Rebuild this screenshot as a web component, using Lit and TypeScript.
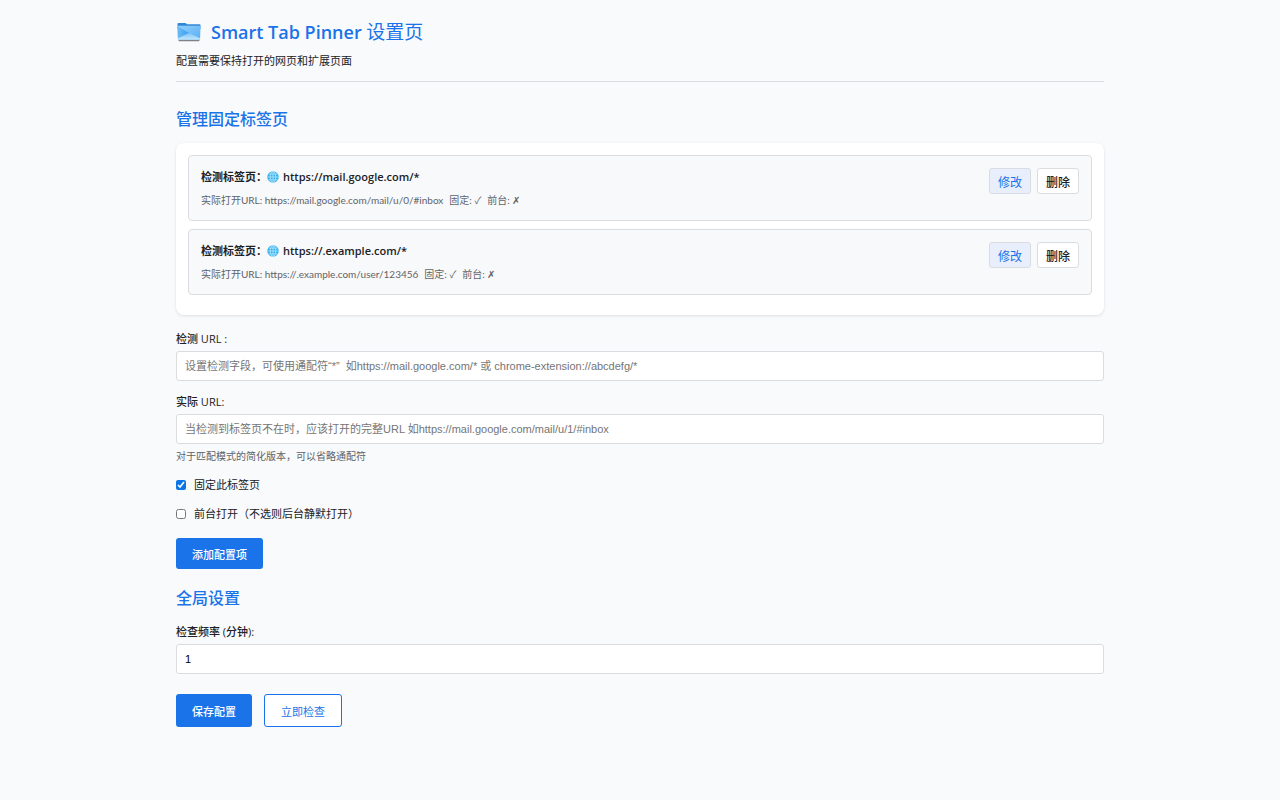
import { LitElement, html, css } from "lit";
import { customElement, property, state } from "lit/decorators.js";

interface PinRule {
  match: string;
  open: string;
  pinned: boolean;
  foreground: boolean;
}

const globe = html`<svg class="globe" viewBox="0 0 24 24" aria-hidden="true">
  <circle cx="12" cy="12" r="11.5" fill="#2fb0f0"></circle>
  <g fill="none" stroke="#b5e6fb" stroke-width="1.7">
    <ellipse cx="12" cy="12" rx="5.5" ry="11"></ellipse>
    <path d="M12 1v22M1 12h22M3 6.3h18M3 17.7h18"></path>
  </g>
</svg>`;

const folder = html`<svg class="folder" viewBox="0 0 26 22" aria-hidden="true">
  <defs>
    <linearGradient id="body" x1="0" y1="0" x2="1" y2="1">
      <stop offset="0" stop-color="#8fd0fb"></stop>
      <stop offset="1" stop-color="#5aaef5"></stop>
    </linearGradient>
    <linearGradient id="left" x1="0" y1="0" x2="1" y2="0">
      <stop offset="0" stop-color="#6cbcf6"></stop>
      <stop offset="1" stop-color="#3c9df0"></stop>
    </linearGradient>
    <linearGradient id="bottom" x1="0" y1="0" x2="0" y2="1">
      <stop offset="0" stop-color="#7cc4f8"></stop>
      <stop offset="1" stop-color="#c4e6fb"></stop>
    </linearGradient>
  </defs>
  <path d="M2.500 18h21v1.400a.8.8 0 0 1-.8.8H3.300a.8.8 0 0 1-.8-.8z" fill="#7d8188"></path>
  <path d="M1.500 3a1 1 0 0 1 1-1h7l1.600 1.200H23.500a1 1 0 0 1 1 1V8h-23z" fill="#3387d2"></path>
  <path d="M1.500 4.800h23l-.4 13a1 1 0 0 1-1 1H2.900a1 1 0 0 1-1-1z" fill="url(#body)"></path>
  <path d="M1.500 5.200L13 12 1.900 17.300z" fill="url(#left)"></path>
  <path d="M1.900 17.300L13 12l11.100 5.300a1 1 0 0 1-1 1.500H2.900a1 1 0 0 1-1-1.500z" fill="url(#bottom)"></path>
</svg>`;

@customElement("pin-item")
class PinItem extends LitElement {
  @property({ attribute: false }) rule!: PinRule;

  static styles = css`
    :host {
      display: flex;
      justify-content: space-between;
      align-items: flex-start;
      gap: 12px;
      padding: 12px;
      background: #f8f9fb;
      border: 1px solid #dadce0;
      border-radius: 4px;
    }
    .info {
      min-width: 0;
    }
    .match {
      display: flex;
      align-items: center;
      font-size: 11px;
      line-height: 18px;
      font-weight: 600;
      color: #202124;
    }
    .globe {
      width: 12px;
      height: 12px;
      margin-right: 4px;
    }
    .detail {
      display: flex;
      gap: 6px;
      margin-top: 6px;
      font-family: Lato, "Noto Sans CJK SC", sans-serif;
      font-size: 10px;
      line-height: 16px;
      color: #5f6368;
    }
    .actions {
      display: flex;
      gap: 6px;
      flex: none;
    }
    button {
      box-sizing: border-box;
      height: 26px;
      padding: 0 8px;
      border: 1px solid #dadce0;
      border-radius: 3px;
      background: #fff;
      color: #202124;
      font-family: "Liberation Sans", "Noto Sans CJK SC", sans-serif;
      font-size: 12px;
      font-weight: 500;
      cursor: pointer;
    }
    .edit {
      background: #e8eefc;
      color: #1a73e8;
      font-weight: 400;
    }
  `;

  render() {
    const mark = (on: boolean) => (on ? "✓" : "✗");
    return html`
      <div class="info">
        <div class="match">检测标签页：${globe}${this.rule.match}</div>
        <div class="detail">
          <span>实际打开URL: ${this.rule.open}</span>
          <span>固定: ${mark(this.rule.pinned)}</span>
          <span>前台: ${mark(this.rule.foreground)}</span>
        </div>
      </div>
      <div class="actions">
        <button class="edit" type="button">修改</button>
        <button type="button">删除</button>
      </div>
    `;
  }
}

@customElement("app-root")
class AppRoot extends LitElement {
  @state() private rules: PinRule[] = [
    { match: "https://mail.google.com/*", open: "https://mail.google.com/mail/u/0/#inbox", pinned: true, foreground: false },
    { match: "https://.example.com/*", open: "https://.example.com/user/123456", pinned: true, foreground: false },
  ];

  static styles = css`
    :host {
      display: block;
      box-sizing: border-box;
      min-height: 100vh;
      background: #f8fafc;
      color: #202124;
      font-family: "Open Sans", "Noto Sans CJK SC", sans-serif;
      font-size: 11px;
      line-height: 16px;
    }
    main {
      box-sizing: border-box;
      max-width: 960px;
      margin: 0 auto;
      padding: 20px 16px;
    }
    header {
      padding-bottom: 11px;
      border-bottom: 1px solid #dadce0;
    }
    h1 {
      display: flex;
      align-items: center;
      gap: 9px;
      margin: 0;
      font-size: 18px;
      line-height: 24px;
      font-weight: 600;
      color: #1a73e8;
    }
    .zh {
      font-size: 19px;
      font-weight: 400;
    }
    .folder {
      width: 26px;
      height: 22px;
    }
    .subtitle {
      margin: 8px 0 0;
      line-height: 18px;
    }
    h2 {
      margin: 25px 0 12px;
      font-size: 16px;
      line-height: 24px;
      font-weight: 500;
      color: #1a73e8;
    }
    .panel {
      display: flex;
      flex-direction: column;
      gap: 8px;
      margin-bottom: 16px;
      padding: 12px 12px 20px;
      background: #fff;
      border-radius: 8px;
      box-shadow: 0 1px 3px rgba(60, 64, 67, 0.14);
    }
    .field {
      display: flex;
      flex-direction: column;
      gap: 4px;
      margin-bottom: 13px;
    }
    .field label {
      font-weight: 500;
    }
    .text {
      box-sizing: border-box;
      width: 100%;
      height: 30px;
      padding: 0 8px;
      border: 1px solid #dadce0;
      border-radius: 3px;
      background: #fff;
      color: #000;
      font-family: "Liberation Sans", "Noto Sans CJK SC", sans-serif;
      font-size: 11px;
    }
    .text::placeholder {
      color: #757575;
    }
    .hint {
      font-size: 10px;
      color: #5f6368;
    }
    .check {
      display: flex;
      align-items: center;
      gap: 8px;
      margin-bottom: 13px;
    }
    .check input {
      width: 10px;
      height: 10px;
      margin: 0;
      accent-color: #0b75e8;
    }
    .primary,
    .outline {
      box-sizing: border-box;
      min-height: 31px;
      padding: 0 16px;
      border: 0;
      border-radius: 3px;
      background: #1a73e8;
      color: #fff;
      font-family: "Liberation Sans", "Noto Sans CJK SC", sans-serif;
      font-size: 11px;
      font-weight: 500;
      cursor: pointer;
    }
    .outline {
      min-height: 33px;
      border: 1px solid #1a73e8;
      background: #fff;
      color: #1a73e8;
      font-weight: 400;
    }
    .settings {
      margin: 17px 0 14px;
    }
    .footer {
      display: flex;
      gap: 12px;
      margin-top: 20px;
    }
    .add {
      display: block;
      margin-top: 16px;
    }
  `;

  render() {
    return html`
      <main>
        <header>
          <h1>${folder}<span>Smart Tab Pinner <span class="zh">设置页</span></span></h1>
          <p class="subtitle">配置需要保持打开的网页和扩展页面</p>
        </header>

        <h2>管理固定标签页</h2>
        <section class="panel">
          ${this.rules.map((rule) => html`<pin-item .rule=${rule}></pin-item>`)}
        </section>

        <form>
          <div class="field">
            <label for="match">检测 URL :</label>
            <input class="text" id="match" type="text" placeholder="设置检测字段，可使用通配符“*”  如https://mail.google.com/* 或 chrome-extension://abcdefg/*" />
          </div>
          <div class="field">
            <label for="open">实际 URL:</label>
            <input class="text" id="open" type="text" placeholder="当检测到标签页不在时，应该打开的完整URL 如https://mail.google.com/mail/u/1/#inbox" />
            <span class="hint">对于匹配模式的简化版本，可以省略通配符</span>
          </div>
          <div class="check">
            <input id="pin" type="checkbox" checked />
            <label for="pin">固定此标签页</label>
          </div>
          <div class="check">
            <input id="front-open" type="checkbox" />
            <label for="front-open">前台打开（不选则后台静默打开）</label>
          </div>
          <button class="primary add" type="button">添加配置项</button>
        </form>

        <h2 class="settings">全局设置</h2>
        <div class="field">
          <label for="interval">检查频率 (分钟):</label>
          <input class="text" id="interval" type="number" value="1" min="1" />
        </div>
        <div class="footer">
          <button class="primary" type="button">保存配置</button>
          <button class="outline" type="button">立即检查</button>
        </div>
      </main>
    `;
  }
}
